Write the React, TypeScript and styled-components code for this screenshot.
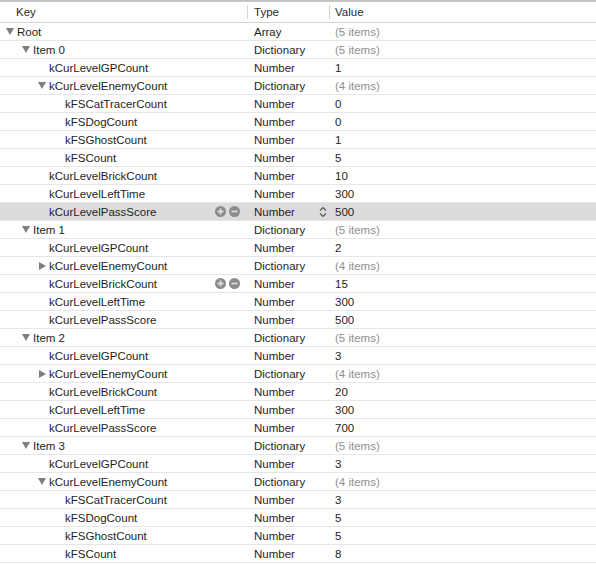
import React from 'react';
import styled, { createGlobalStyle } from 'styled-components';

const GlobalStyle = createGlobalStyle`
  html, body {
    margin: 0;
    padding: 0;
    background: #ffffff;
  }
  body {
    font-family: "Liberation Sans", Arial, sans-serif;
    font-size: 11.5px;
    color: #1e1e1e;
    -webkit-font-smoothing: antialiased;
  }
`;

const COLS = '248px 82px 1fr';

const Table = styled.div`
  width: 596px;
  display: flex;
  flex-direction: column;
`;

const Header = styled.div`
  display: grid;
  grid-template-columns: ${COLS};
  height: 23px;
  box-sizing: border-box;
  border-top: 2px solid #c4c4c4;
  border-bottom: 1px solid #d2d2d2;
  align-items: center;
`;

const HeadCell = styled.div<{ $pad: number; $divider?: boolean }>`
  height: 100%;
  display: flex;
  align-items: center;
  padding-left: ${({ $pad }) => $pad}px;
  color: #2a2a2a;
  position: relative;
  box-sizing: border-box;

  &::before {
    content: '';
    display: ${({ $divider }) => ($divider ? 'block' : 'none')};
    position: absolute;
    left: -1px;
    top: 3px;
    bottom: 3px;
    width: 1px;
    background: #d6d6d6;
  }
`;

const Row = styled.div<{ $selected?: boolean }>`
  display: grid;
  grid-template-columns: ${COLS};
  height: 18px;
  box-sizing: border-box;
  border-bottom: 1px solid #e6e6e6;
  background: ${({ $selected }) => ($selected ? '#dcdcdc' : 'transparent')};
  align-items: center;
`;

const KeyCell = styled.div<{ $level: number }>`
  display: flex;
  align-items: center;
  height: 100%;
  padding-left: ${({ $level }) => 6 + $level * 16}px;
  padding-right: 8px;
  box-sizing: border-box;
`;

const Disclosure = styled.span<{ $state: 'open' | 'closed' | 'none' }>`
  width: 8px;
  height: 8px;
  margin-right: 3px;
  flex: none;
  display: flex;
  align-items: center;
  justify-content: center;

  &::after {
    content: '';
    display: ${({ $state }) => ($state === 'none' ? 'none' : 'block')};
    width: 0;
    height: 0;
    ${({ $state }) =>
      $state === 'open'
        ? `border-left: 4px solid transparent;
           border-right: 4px solid transparent;
           border-top: 7px solid #7d7d7d;`
        : `border-top: 4px solid transparent;
           border-bottom: 4px solid transparent;
           border-left: 7px solid #7d7d7d;`}
  }
`;

const KeyText = styled.span`
  flex: 1;
  white-space: nowrap;
`;

const RowButtons = styled.span`
  display: flex;
  gap: 3px;
  align-items: center;
`;

const TypeCell = styled.div`
  display: flex;
  align-items: center;
  justify-content: space-between;
  height: 100%;
  padding-left: 6px;
  padding-right: 3px;
  box-sizing: border-box;
`;

const ValueCell = styled.div<{ $muted: boolean }>`
  display: flex;
  align-items: center;
  height: 100%;
  padding-left: 5px;
  color: ${({ $muted }) => ($muted ? '#8f8f8f' : '#1e1e1e')};
`;

const CircleIcon: React.FC<{ plus?: boolean }> = ({ plus }) => (
  <svg width="11" height="11" viewBox="0 0 11 11">
    <circle cx="5.5" cy="5.5" r="5.5" fill="#8c8c8c" />
    <rect x="2.5" y="4.6" width="6" height="1.8" fill="#dcdcdc" />
    {plus && <rect x="4.6" y="2.5" width="1.8" height="6" fill="#dcdcdc" />}
  </svg>
);

const Stepper = () => (
  <svg width="8" height="12" viewBox="0 0 8 12">
    <path d="M1 4.5 L4 1.5 L7 4.5 M1 7.5 L4 10.5 L7 7.5" stroke="#555" strokeWidth="1.2" fill="none" />
  </svg>
);

type Item = {
  key: string;
  level: number;
  type: string;
  value: string;
  state?: 'open' | 'closed';
  selected?: boolean;
  hover?: boolean;
};

const n = (key: string, level: number, value: string, extra: Partial<Item> = {}): Item => ({
  key,
  level,
  type: 'Number',
  value,
  ...extra,
});

const d = (key: string, level: number, count: number, state: 'open' | 'closed'): Item => ({
  key,
  level,
  type: 'Dictionary',
  value: `(${count} items)`,
  state,
});

const rows: Item[] = [
  { key: 'Root', level: 0, type: 'Array', value: '(5 items)', state: 'open' },
  d('Item 0', 1, 5, 'open'),
  n('kCurLevelGPCount', 2, '1'),
  d('kCurLevelEnemyCount', 2, 4, 'open'),
  n('kFSCatTracerCount', 3, '0'),
  n('kFSDogCount', 3, '0'),
  n('kFSGhostCount', 3, '1'),
  n('kFSCount', 3, '5'),
  n('kCurLevelBrickCount', 2, '10'),
  n('kCurLevelLeftTime', 2, '300'),
  n('kCurLevelPassScore', 2, '500', { selected: true, hover: true }),
  d('Item 1', 1, 5, 'open'),
  n('kCurLevelGPCount', 2, '2'),
  d('kCurLevelEnemyCount', 2, 4, 'closed'),
  n('kCurLevelBrickCount', 2, '15', { hover: true }),
  n('kCurLevelLeftTime', 2, '300'),
  n('kCurLevelPassScore', 2, '500'),
  d('Item 2', 1, 5, 'open'),
  n('kCurLevelGPCount', 2, '3'),
  d('kCurLevelEnemyCount', 2, 4, 'closed'),
  n('kCurLevelBrickCount', 2, '20'),
  n('kCurLevelLeftTime', 2, '300'),
  n('kCurLevelPassScore', 2, '700'),
  d('Item 3', 1, 5, 'open'),
  n('kCurLevelGPCount', 2, '3'),
  d('kCurLevelEnemyCount', 2, 4, 'open'),
  n('kFSCatTracerCount', 3, '3'),
  n('kFSDogCount', 3, '5'),
  n('kFSGhostCount', 3, '5'),
  n('kFSCount', 3, '8'),
];

const App: React.FC = () => (
  <>
    <GlobalStyle />
    <Table>
      <Header>
        <HeadCell $pad={16}>Key</HeadCell>
        <HeadCell $pad={6} $divider>Type</HeadCell>
        <HeadCell $pad={5} $divider>Value</HeadCell>
      </Header>
      {rows.map((r, i) => (
        <Row key={i} $selected={r.selected}>
          <KeyCell $level={r.level}>
            <Disclosure $state={r.state ?? 'none'} />
            <KeyText>{r.key}</KeyText>
            {r.hover && (
              <RowButtons>
                <CircleIcon plus />
                <CircleIcon />
              </RowButtons>
            )}
          </KeyCell>
          <TypeCell>
            <span>{r.type}</span>
            {r.selected && <Stepper />}
          </TypeCell>
          <ValueCell $muted={r.value.startsWith('(')}>{r.value}</ValueCell>
        </Row>
      ))}
    </Table>
  </>
);

export default App;
